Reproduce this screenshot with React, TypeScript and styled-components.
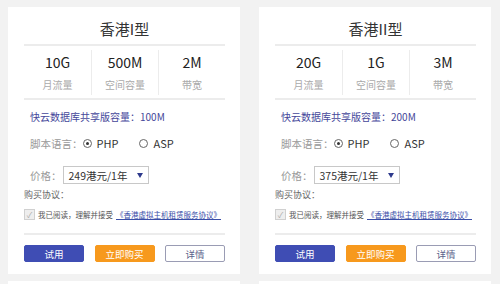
import styled, { createGlobalStyle } from "styled-components";

const GlobalStyle = createGlobalStyle`
  html, body {
    margin: 0;
    padding: 0;
    overflow: hidden;
    background: #f2f2f2;
    font-family: "Noto Sans CJK SC", "Noto Sans", sans-serif;
  }
`;

const Page = styled.div`
  display: grid;
  grid-template-columns: 232px 232px;
  column-gap: 19px;
  row-gap: 7px;
  padding: 7px 9px 0 8px;
  height: 284px;
  box-sizing: border-box;
  overflow: hidden;
`;

const Card = styled.div`
  background: #fff;
  padding: 11px 15px 12px 16px;
  display: flex;
  flex-direction: column;
`;

// next row of plans, only its top edge shows in the frame
const NextCard = styled.div`
  background: #fff;
  height: 40px;
`;

const Title = styled.div`
  text-align: center;
  font-size: 15px;
  line-height: 22px;
  color: #333;
  border-bottom: 2px solid #ececec;
  padding-bottom: 4px;
`;

const Stats = styled.div`
  display: grid;
  grid-template-columns: repeat(3, 1fr);
  border-bottom: 2px solid #ececec;
  padding: 4px 0 3px;
`;

const Stat = styled.div<{ $divider?: boolean }>`
  display: flex;
  flex-direction: column;
  align-items: center;
  border-left: ${(p) => (p.$divider ? "1px solid #ececec" : "none")};
  padding: 2px 0 2px;
`;

const Value = styled.div`
  font-size: 14px;
  line-height: 20px;
  color: #222;
`;

const Label = styled.div`
  font-size: 10px;
  line-height: 16px;
  margin-top: 5px;
  color: #aaa;
`;

const Body = styled.div`
  padding-left: 6px;
  display: flex;
  flex-direction: column;
`;

const DbText = styled.div`
  margin-top: 8px;
  font-size: 10px;
  line-height: 18px;
  color: #45479a;
`;

const Row = styled.div<{ $top: number }>`
  display: flex;
  align-items: center;
  margin-top: ${(p) => p.$top}px;
  height: 18px;
  font-size: 10.5px;
  color: #999;
`;

const RadioOpt = styled.span<{ $gap?: number }>`
  display: inline-flex;
  align-items: center;
  margin-left: ${(p) => p.$gap ?? 0}px;
  color: #333;
  font-size: 11px;
`;

const Circle = styled.span<{ $on?: boolean }>`
  width: 7px;
  height: 7px;
  border: 1px solid #666;
  border-radius: 50%;
  margin-right: 5px;
  display: inline-flex;
  align-items: center;
  justify-content: center;
  &::after {
    content: "";
    width: 3px;
    height: 3px;
    border-radius: 50%;
    background: ${(p) => (p.$on ? "#333" : "transparent")};
  }
`;

const Select = styled.div`
  margin-left: 1px;
  width: 86px;
  height: 18px;
  box-sizing: border-box;
  border: 1px solid #c8c8c8;
  display: flex;
  align-items: center;
  justify-content: space-between;
  padding: 0 5px 0 5px;
  color: #333;
  font-size: 10.5px;
`;

const Arrow = styled.span`
  width: 0;
  height: 0;
  border-left: 3px solid transparent;
  border-right: 3px solid transparent;
  border-top: 5px solid #2e3a8c;
`;

const Agreement = styled.div`
  margin-top: 3px;
  font-size: 9px;
  line-height: 16px;
  color: #666;
`;

const CheckRow = styled.div`
  display: flex;
  align-items: center;
  margin-top: 3px;
  height: 16px;
  font-size: 7.5px;
  color: #555;
`;

const Check = styled.span`
  width: 9px;
  height: 9px;
  border: 1px solid #d0d0d0;
  background: #eee;
  margin-right: 3px;
  color: #aaa;
  font-size: 8px;
  line-height: 9px;
  text-align: center;
`;

const Link = styled.a`
  margin-left: 3px;
  color: #3a4ea8;
  text-decoration: underline;
`;

const Buttons = styled.div`
  margin-top: 11px;
  border-top: 2px solid #ececec;
  padding-top: 10px;
  display: flex;
  justify-content: space-between;
`;

const Btn = styled.div<{ $kind: "blue" | "orange" | "line" }>`
  width: 60px;
  height: 17px;
  box-sizing: border-box;
  border-radius: 2px;
  display: flex;
  align-items: center;
  justify-content: center;
  font-size: 9.5px;
  background: ${(p) =>
    p.$kind === "blue" ? "#3f4db4" : p.$kind === "orange" ? "#f7991d" : "#fff"};
  color: ${(p) => (p.$kind === "line" ? "#5a5f8a" : "#fff")};
  border: 1px solid
    ${(p) =>
      p.$kind === "blue" ? "#3f4db4" : p.$kind === "orange" ? "#f7991d" : "#9a9cb4"};
`;

const plans = [
  { name: "香港I型", flow: "10G", space: "500M", bw: "2M", db: "100M", price: "249港元/1年" },
  { name: "香港II型", flow: "20G", space: "1G", bw: "3M", db: "200M", price: "375港元/1年" },
];

export default function App() {
  return (
    <>
      <GlobalStyle />
      <Page>
        {plans.map((p) => (
          <Card key={p.name}>
            <Title>{p.name}</Title>
            <Stats>
              <Stat>
                <Value>{p.flow}</Value>
                <Label>月流量</Label>
              </Stat>
              <Stat $divider>
                <Value>{p.space}</Value>
                <Label>空间容量</Label>
              </Stat>
              <Stat $divider>
                <Value>{p.bw}</Value>
                <Label>带宽</Label>
              </Stat>
            </Stats>
            <Body>
              <DbText>快云数据库共享版容量：{p.db}</DbText>
              <Row $top={8}>
                脚本语言：
                <RadioOpt>
                  <Circle $on />
                  PHP
                </RadioOpt>
                <RadioOpt $gap={21}>
                  <Circle />
                  ASP
                </RadioOpt>
              </Row>
              <Row $top={14}>
                价格：
                <Select>
                  {p.price}
                  <Arrow />
                </Select>
              </Row>
            </Body>
            <Agreement>购买协议：</Agreement>
            <CheckRow>
              <Check>✓</Check>
              我已阅读，理解并接受
              <Link>《香港虚拟主机租赁服务协议》</Link>
            </CheckRow>
            <Buttons>
              <Btn $kind="blue">试用</Btn>
              <Btn $kind="orange">立即购买</Btn>
              <Btn $kind="line">详情</Btn>
            </Buttons>
          </Card>
        ))}
        <NextCard />
        <NextCard />
      </Page>
    </>
  );
}
